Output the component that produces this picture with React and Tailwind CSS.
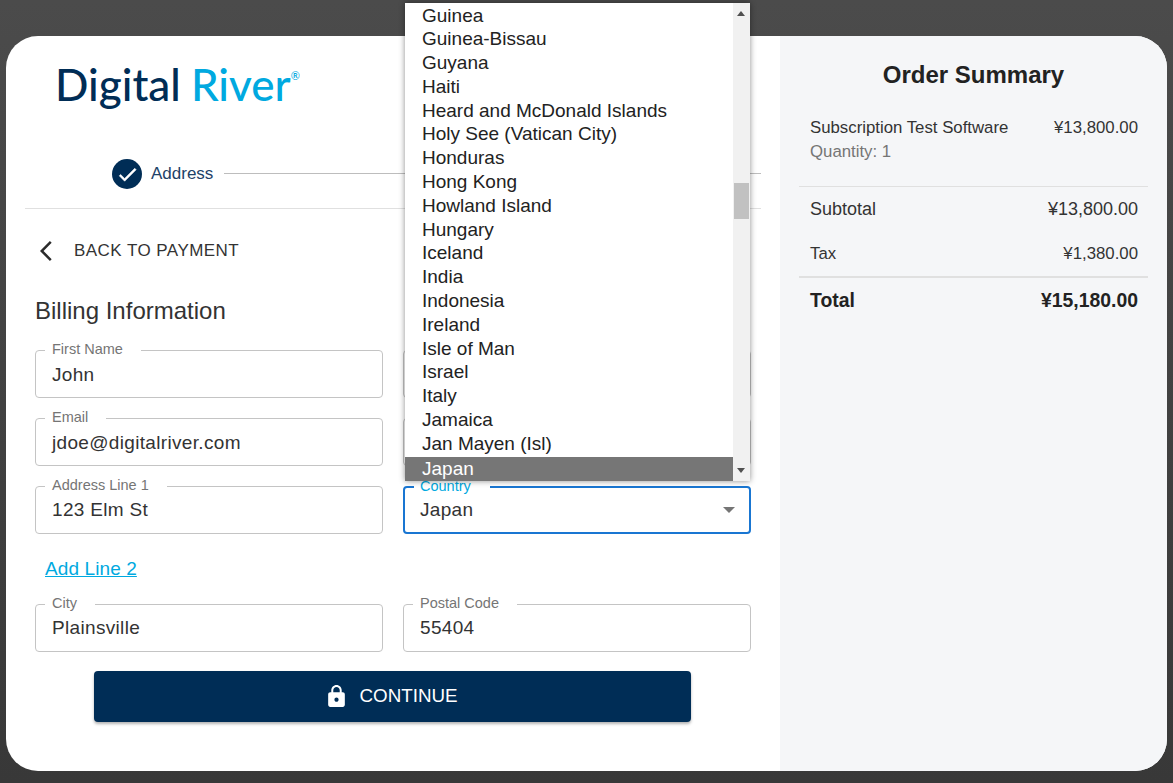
const countries = ["Guinea","Guinea-Bissau","Guyana","Haiti","Heard and McDonald Islands","Holy See (Vatican City)","Honduras","Hong Kong","Howland Island","Hungary","Iceland","India","Indonesia","Ireland","Isle of Man","Israel","Italy","Jamaica","Jan Mayen (Isl)"];

function Field({ label, value, focused, select, low }) {
  return (
    <div className={`relative h-12 flex-1 rounded-[4px] ${focused ? "border-2 border-[#1976d2] px-[15px]" : "border border-[#c4c4c4] px-4"}`}>
      {label && (
        <div className={`absolute left-[9px] ${focused ? "-top-[10px] pl-[6px] pr-[19px] text-[#00a9e0]" : "-top-[10px] pl-[7px] pr-[18px] text-[#757575]"} bg-white text-[14.5px] leading-[16px]`}>{label}</div>
      )}
      <div className={`flex h-full items-center justify-between text-[19px] tracking-[0.33px] text-[#333] ${low ? "pt-[2px]" : ""}`}>
        <span>{value}</span>
        {select && <span className="-mr-[1px] h-0 w-0 border-x-[6px] border-t-[6px] border-x-transparent border-t-[#757575]" />}
      </div>
    </div>
  );
}

function Row({ children }) {
  return <div className="flex gap-5">{children}</div>;
}

export default function App() {
  return (
    <div className="relative h-[783px] w-[1173px] overflow-hidden bg-gradient-to-b from-[#4b4b4b] to-[#383838] px-[6px] pb-[12px] pt-[36px] font-['Liberation_Sans',Arial,sans-serif]">
      <div className="flex h-full overflow-hidden rounded-[32px] bg-white">
        <main className="flex w-[774px] flex-col">
          <div className="ml-[49px] mt-[18px] flex h-[60px] items-start font-['Lato',sans-serif] text-[44px] font-medium leading-[60px]">
            <span className="text-[#002d56]">Digital</span>
            <span className="ml-[10px] text-[#00a9e0]">River</span>
            <span className="ml-[0px] mt-[-8px] text-[11px] text-[#00a9e0]">®</span>
          </div>
          <div className="mx-[19px] mt-[34px] flex h-[61px] items-start border-b border-[#e0e0e0] pl-[87px]">
            <div className="mt-[11px] flex h-[30px] w-[30px] items-center justify-center rounded-full bg-[#002d56]">
              <svg viewBox="0 0 24 24" className="h-[23px] w-[23px] fill-white stroke-white stroke-[0.6]"><path d="M9 16.17L4.83 12l-1.42 1.41L9 19 21 7l-1.41-1.41z" /></svg>
            </div>
            <span className="ml-[9px] mt-[16px] text-[17px] leading-[20px] text-[#1e4268]">Address</span>
            <div className="ml-[11px] mt-[25px] h-px flex-1 bg-[#bdbdbd]" />
          </div>
          <div className="ml-[34px] mt-[29px] flex h-[26px] items-center">
            <svg viewBox="0 0 24 24" className="h-6 w-6 fill-[#2b2b2b]"><path d="M11.67 3.87L9.9 2.1 0 12l9.9 9.9 1.77-1.77L3.54 12z" /></svg>
            <span className="ml-[10px] text-[17px] tracking-[0.45px] text-[#333]">BACK TO PAYMENT</span>
          </div>
          <h2 className="ml-[29px] mt-[33px] text-[24px] font-normal leading-[28px] text-[#333]">Billing Information</h2>
          <div className="mx-[29px] mt-[25px] flex flex-col gap-5">
            <Row><Field label="First Name" value="John" low /><Field /></Row>
            <Row><Field label="Email" value="jdoe@digitalriver.com" low /><Field /></Row>
            <Row><Field label="Address Line 1" value="123 Elm St" /><Field label="Country" value="Japan" focused select /></Row>
          </div>
          <a className="ml-[39px] mt-[23px] h-[24px] self-start text-[19px] tracking-[0.1px] leading-[24px] text-[#00a9e0] underline">Add Line 2</a>
          <div className="mx-[29px] mt-[23px]">
            <Row><Field label="City" value="Plainsville" /><Field label="Postal Code" value="55404" /></Row>
          </div>
          <button className="ml-[88px] mt-[19px] flex h-[51px] w-[597px] items-center justify-center rounded-[4px] bg-[#002d56] pr-[3px] text-[18.8px] font-normal text-white shadow-[0_2px_3px_rgba(0,0,0,0.3)]">
            <svg viewBox="0 0 24 24" className="mr-[10px] h-[25px] w-[25px] fill-white"><path d="M18 8h-1V6c0-2.76-2.24-5-5-5S7 3.24 7 6v2H6c-1.1 0-2 .9-2 2v10c0 1.1.9 2 2 2h12c1.1 0 2-.9 2-2V10c0-1.1-.9-2-2-2zm-6 9c-1.1 0-2-.9-2-2s.9-2 2-2 2 .9 2 2-.9 2-2 2zm3.1-9H8.9V6c0-1.71 1.39-3.1 3.1-3.1 1.71 0 3.1 1.39 3.1 3.1v2z" /></svg>
            CONTINUE
          </button>
        </main>
        <aside className="flex flex-1 flex-col bg-[#f5f6f8] px-[19px] text-[#333]">
          <h2 className="mt-[24px] text-center text-[24px] font-bold leading-[30px] text-[#222]">Order Summary</h2>
          <div className="mt-[26px] border-b border-[#e0e0e0] pb-[22px] pl-[11px] pr-[10px]">
            <div className="flex justify-between text-[16.8px] leading-[24px]"><span>Subscription Test Software</span><span>¥13,800.00</span></div>
            <div className="text-[16.8px] leading-[24px] text-[#757575]">Quantity: 1</div>
          </div>
          <div className="mt-[10px] flex justify-between pl-[11px] pr-[10px] text-[18px] leading-[24px]"><span>Subtotal</span><span>¥13,800.00</span></div>
          <div className="mt-[21px] flex justify-between pl-[11px] pr-[10px] text-[16.8px] leading-[24px]"><span>Tax</span><span>¥1,380.00</span></div>
          <div className="mt-[10px] flex justify-between border-t-2 border-[#e0e0e0] pl-[11px] pr-[10px] pt-[10px] text-[19.4px] font-bold leading-[24px] text-[#222]"><span>Total</span><span>¥15,180.00</span></div>
        </aside>
      </div>

      <div className="absolute left-[405px] top-[3px] flex h-[478px] w-[345px] bg-white shadow-[0_0_6px_rgba(0,0,0,0.45)]">
        <ul className="flex-1 pt-[0.5px] text-[19px] text-[#222]">
          {countries.map((c) => (
            <li key={c} className="h-[23.8px] pl-[17px] leading-[23.8px]">{c}</li>
          ))}
          <li className="mt-[1px] h-[24px] bg-[#767676] pl-[17px] leading-[24px] text-white">Japan</li>
        </ul>
        <div className="relative flex w-[17px] flex-col justify-between bg-[#f1f1f1] px-[4px] py-[8px]">
          <span className="h-0 w-0 border-x-[4px] border-b-[5px] border-x-transparent border-b-[#505050]" />
          <span className="h-0 w-0 border-x-[4px] border-t-[5px] border-x-transparent border-t-[#505050]" />
          <span className="absolute left-[1px] top-[180px] h-[36px] w-[15px] bg-[#c1c1c1]" />
        </div>
      </div>
    </div>
  );
}
